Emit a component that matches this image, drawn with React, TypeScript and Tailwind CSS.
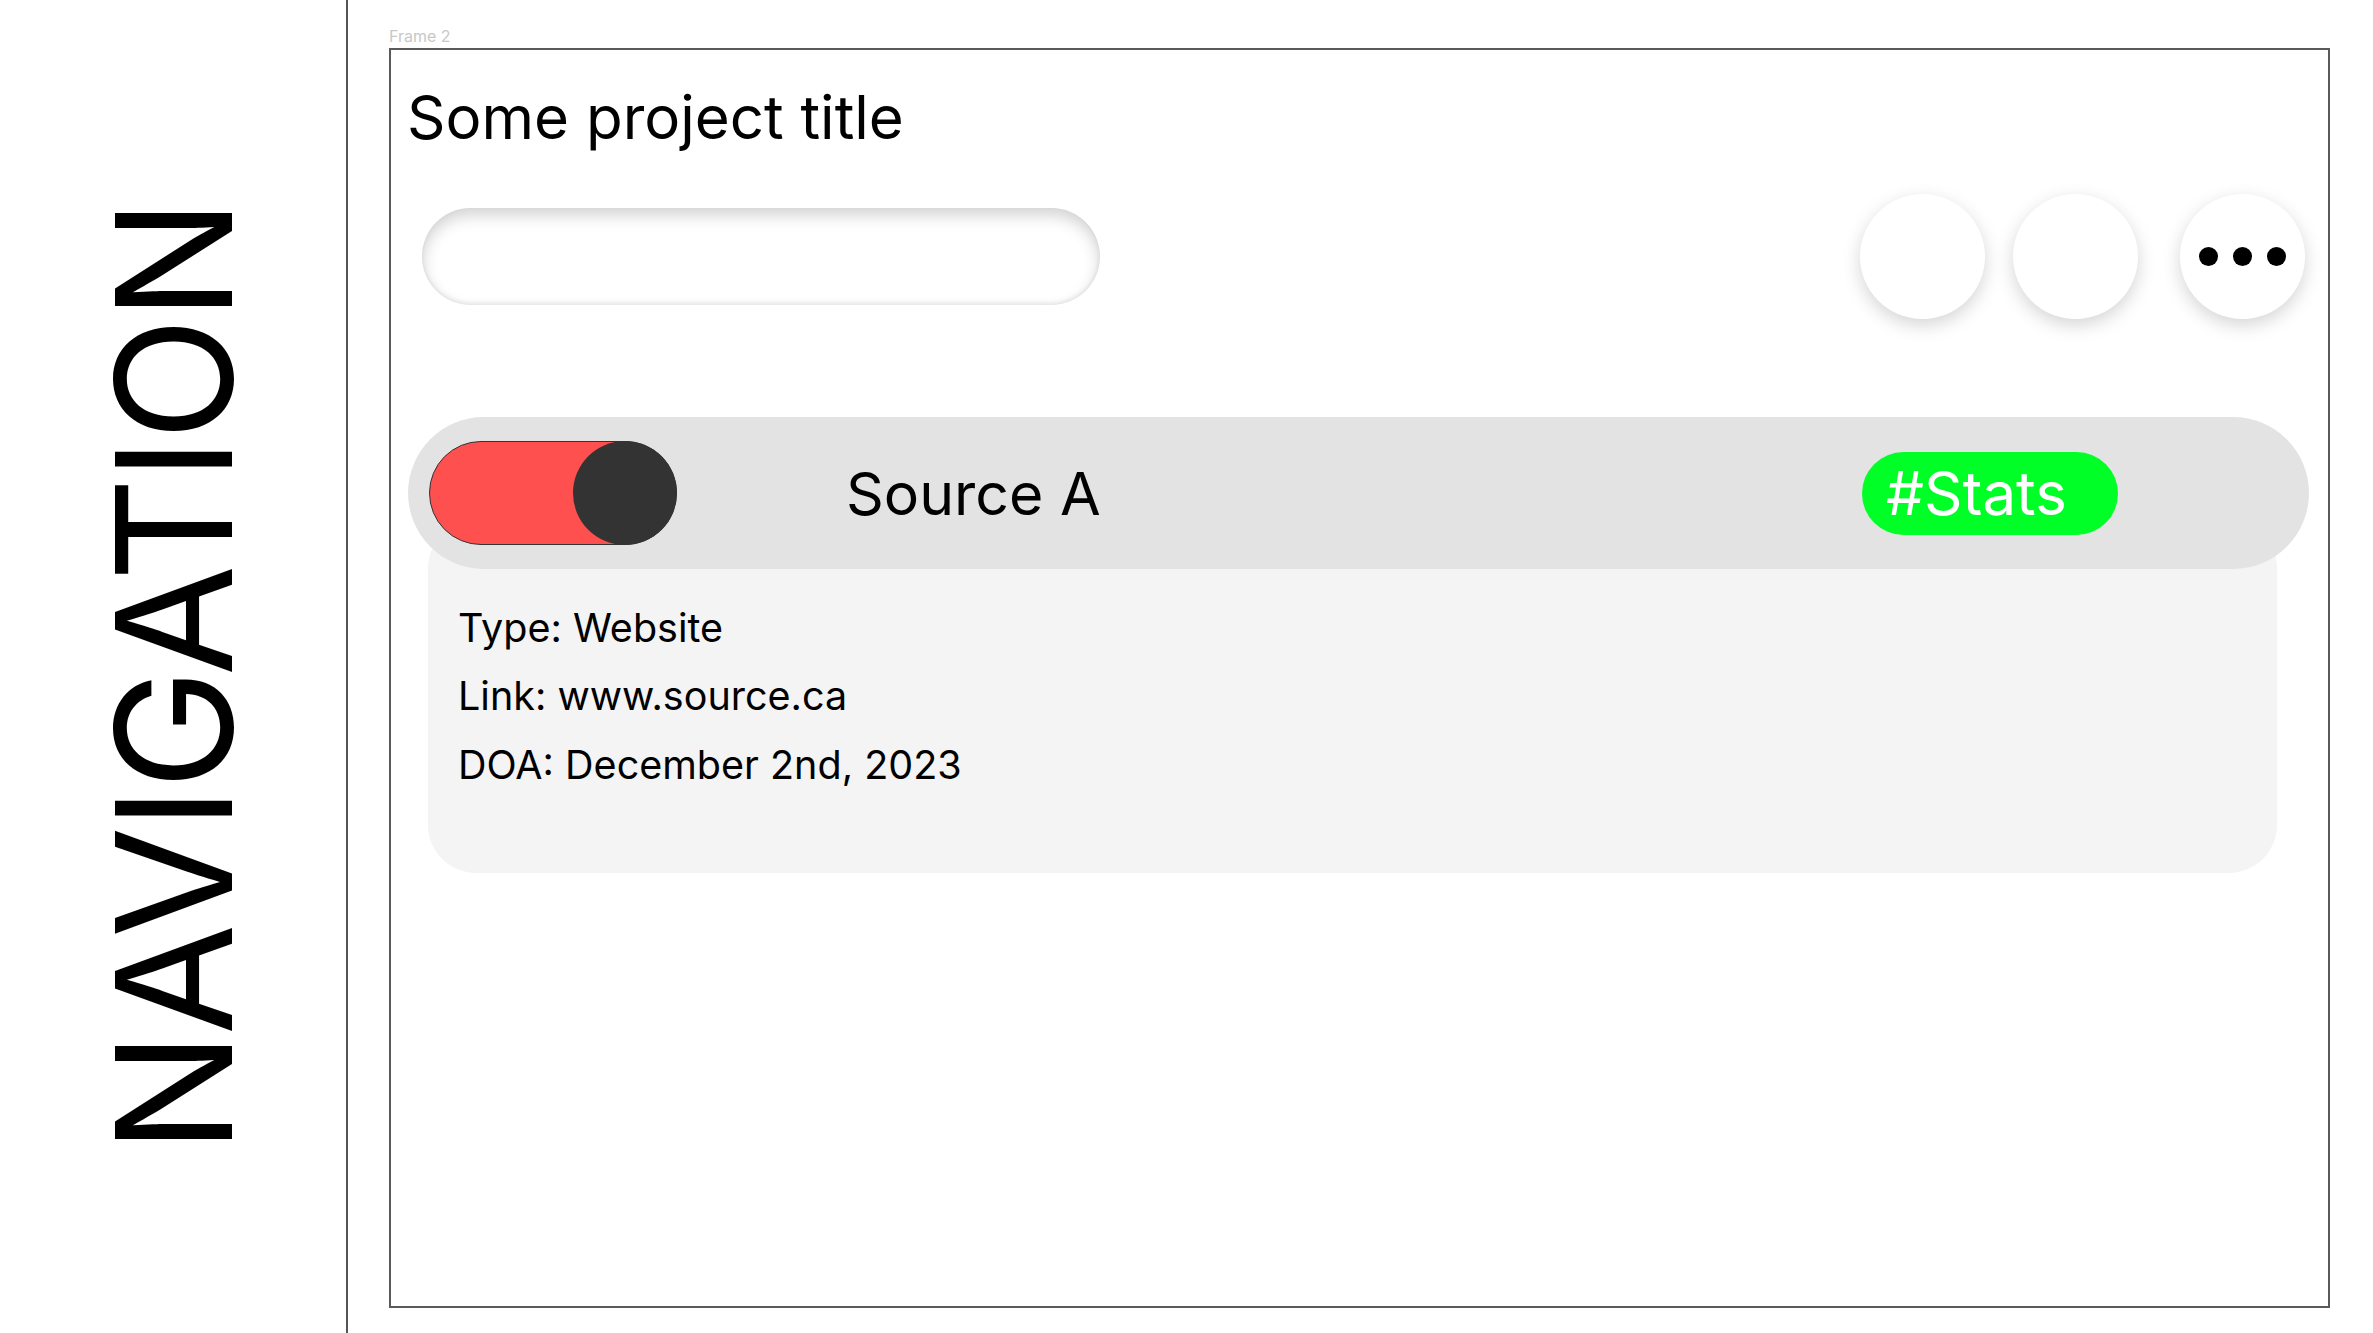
import React from "react";

/**
 * Figma-style wireframe: vertical NAVIGATION rail + "Frame 2" project board
 * with a search pill, round action buttons and one source row.
 */

const font = "font-['Inter',_'Noto_Sans',_sans-serif]";

function SourceRow() {
  return (
    <div className="mt-[98px] ml-[17px] mr-[19px]">
      {/* Header bar */}
      <div className="relative z-10 flex h-[152px] items-center rounded-full bg-[#e3e3e3] pl-[21px] pr-[191px]">
        {/* Toggle */}
        <div className="flex h-[104px] w-[248px] justify-end rounded-full border border-[#333] bg-[#ff5050]">
          <span className="-m-px h-[104px] w-[104px] rounded-full bg-[#333]" />
        </div>
        <span className="ml-[169px] text-[59px] leading-none text-black">
          Source A
        </span>
        <span className="ml-auto flex h-[83px] w-[256px] items-center rounded-full bg-[#00ff26] pl-[24px] text-[60px] leading-none text-white">
          #Stats
        </span>
      </div>

      {/* Details card, tucked under the bar */}
      <div className="-mt-[49px] ml-[20px] mr-[32px] h-[353px] rounded-[48px] bg-[#f4f4f4] pl-[30px] pt-[74px]">
        <p className="text-[39.5px] leading-[68px] text-black">Type: Website</p>
        <p className="text-[39.5px] leading-[68px] text-black">
          Link: www.source.ca
        </p>
        <p className="text-[39.5px] leading-[70px] text-black">
          DOA: December 2nd, 2023
        </p>
      </div>
    </div>
  );
}

export default function App() {
  return (
    <div className={`flex h-[1333px] w-[2373px] bg-white ${font}`}>
      {/* Navigation rail */}
      <aside className="flex h-full w-[348px] shrink-0 items-center justify-center border-r-2 border-[#555]">
        <span className="mt-[22px] rotate-180 text-[161px] leading-none tracking-[-3px] text-black [writing-mode:vertical-rl]">
          NAVIGATION
        </span>
      </aside>

      {/* Canvas */}
      <main className="pl-[41px] pt-[26px]">
        <p className="mb-[2px] text-[16px] leading-[20px] text-[#c8c8c8]">
          Frame 2
        </p>
        <section className="h-[1260px] w-[1941px] border-2 border-[#5a5a5a]">
          <h1 className="ml-[16px] mt-[37px] text-[60px] font-normal leading-none text-black">
            Some project title
          </h1>

          {/* Search + actions */}
          <div className="mt-[47px] flex h-[125px] items-center pl-[31px] pr-[23px]">
            <div className="h-[97px] w-[678px] rounded-full bg-white shadow-[inset_0_7px_16px_rgba(0,0,0,0.18),inset_0_-2px_4px_rgba(0,0,0,0.08)]" />
            <div className="ml-auto flex items-center">
              <button className="h-[125px] w-[125px] rounded-full bg-white shadow-[0_6px_18px_rgba(0,0,0,0.17)]" />
              <button className="ml-[28px] h-[125px] w-[125px] rounded-full bg-white shadow-[0_6px_18px_rgba(0,0,0,0.17)]" />
              <button className="ml-[42px] flex h-[125px] w-[125px] items-center justify-center gap-[15px] rounded-full bg-white shadow-[0_6px_18px_rgba(0,0,0,0.17)]">
                <span className="h-[19px] w-[19px] rounded-full bg-black" />
                <span className="h-[19px] w-[19px] rounded-full bg-black" />
                <span className="h-[19px] w-[19px] rounded-full bg-black" />
              </button>
            </div>
          </div>

          <SourceRow />
        </section>
      </main>
    </div>
  );
}
